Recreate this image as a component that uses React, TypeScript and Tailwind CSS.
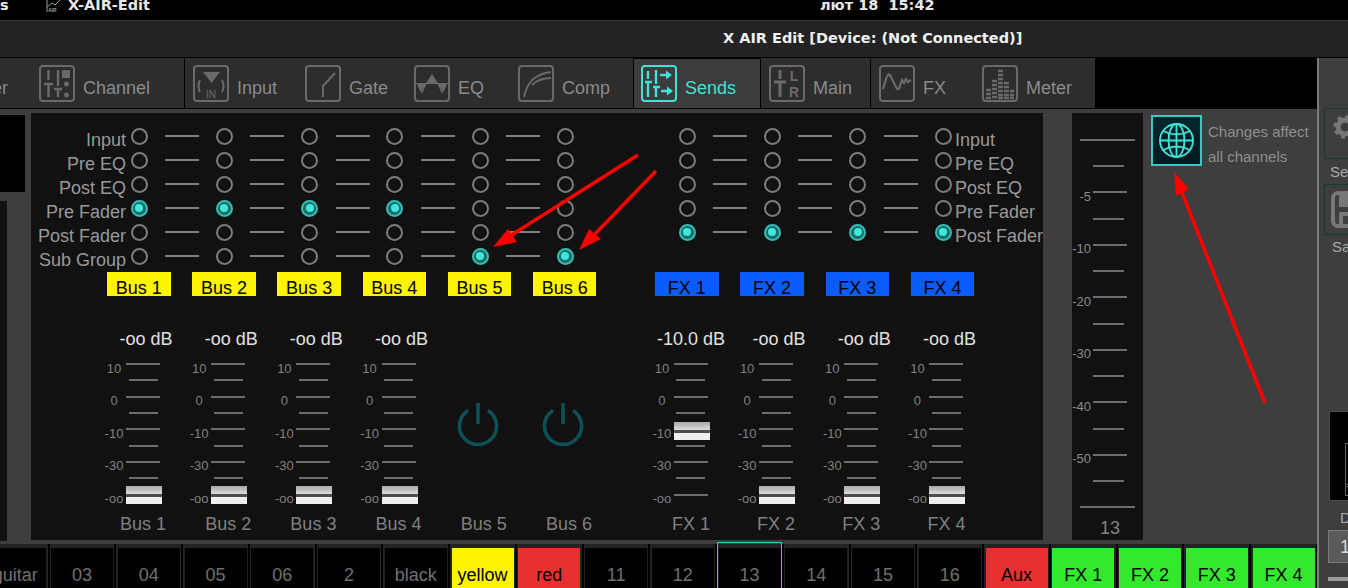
import { ReactNode } from "react";

const GREY = "#6a6a6a";
const CYAN = "#3de3d6";

function IconBox({ color, children }: { color: string; children: ReactNode }) {
  return (
    <svg width="36" height="37" viewBox="0 0 36 37" fill="none" stroke={color} strokeWidth="2" className="shrink-0">
      <rect x="1" y="1" width="34" height="35" rx="3" strokeWidth="2" />
      {children}
    </svg>
  );
}

const icons: Record<string, (c: string) => ReactNode> = {
  Channel: (c) => (
    <IconBox color={c}>
      <path d="M9.500 5v10M5 19h9M9.500 19v13M19 5v16M15 24h8M19 24v8" strokeWidth="2.400" />
      <rect x="23" y="5" width="8" height="8" rx="1" fill={c} stroke="none" />
      <circle cx="27.500" cy="19" r="2.500" fill={c} stroke="none" />
      <circle cx="27.500" cy="30" r="2.500" fill={c} stroke="none" />
    </IconBox>
  ),
  Input: (c) => (
    <IconBox color={c}>
      <path d="M10 7h17l-8.500 11z" fill={c} stroke="none" />
      <path d="M7 15q-3 6 0 12M29 15q3 6 0 12" strokeWidth="2" />
      <text x="18" y="33" textAnchor="middle" fontSize="10" fontFamily="Liberation Sans" fill={c} stroke="none">IN</text>
    </IconBox>
  ),
  Gate: (c) => (
    <IconBox color={c}>
      <path d="M30 8 18 21v11" strokeWidth="2" />
    </IconBox>
  ),
  EQ: (c) => (
    <IconBox color={c}>
      <path d="M18 9 24.500 19h-13zM3 19h7l-3 9zM33 19h-7l3 9zM10 19h2.500l-4 9h-1zM26 19h-2.500l4 9h1z" fill={c} stroke="none" />
      <path d="M2 18.500h32" strokeWidth="1" />
    </IconBox>
  ),
  Comp: (c) => (
    <IconBox color={c}>
      <path d="M6 32C9 18 16 9 33 7M14 20c5-5 10-7 19-7" strokeWidth="1.800" />
    </IconBox>
  ),
  Sends: (c) => (
    <IconBox color={c}>
      <path d="M7 6v8M4 17h7M7 17v15M15 5v14M12 22h7M15 22v10M19 10h7M20 26h7" strokeWidth="2.400" />
      <path d="M25 5.500l6 4.500-6 4.500zM26 21.500l6 4.500-6 4.500z" fill={c} stroke="none" />
    </IconBox>
  ),
  Main: (c) => (
    <IconBox color={c}>
      <path d="M11 5v9M5 17h12M11 17v15" strokeWidth="3" />
      <text x="25" y="16" textAnchor="middle" fontSize="14" fontFamily="Liberation Sans" fontWeight="700" fill={c} stroke="none">L</text>
      <text x="25" y="32" textAnchor="middle" fontSize="14" fontFamily="Liberation Sans" fontWeight="700" fill={c} stroke="none">R</text>
    </IconBox>
  ),
  FX: (c) => (
    <IconBox color={c}>
      <path d="M4 24 7 14Q9 8 11 10L14 16 18 24Q20 25 21 21L23 15 25 18 27 14 29 17 32 15" strokeWidth="2.200" />
    </IconBox>
  ),
  Meter: (c) => (
    <IconBox color={c}>
      <path
        d="M16 6h5M16 10h5M16 14h5M10 16h5M16 18h5M22 18h5M10 20h5M16 22h5M22 22h5M10 24h5M4 25h5M16 26h5M22 26h5M28 26h4M4 29h5M10 28h5M16 30h5M22 30h5M28 30h4M4 33h5M10 32h5M16 33h5M22 33h5M28 33h4"
        strokeWidth="2.600"
      />
    </IconBox>
  ),
};

const tabs = [
  { name: "Channel", w: "w-[146px]", pl: "pl-0", border: true },
  { name: "Input", w: "w-[120px]", pl: "pl-[8px]", border: false },
  { name: "Gate", w: "w-[109px]", pl: "pl-0", border: false },
  { name: "EQ", w: "w-[104px]", pl: "pl-0", border: false },
  { name: "Comp", w: "w-[116px]", pl: "pl-0", border: true },
  { name: "Sends", w: "w-[127px]", pl: "pl-[7px]", border: true },
  { name: "Main", w: "w-[110px]", pl: "pl-[8px]", border: true },
  { name: "FX", w: "w-[111px]", pl: "pl-[8px]", border: false },
  { name: "Meter", w: "w-[113px]", pl: "pl-0", border: false },
];

function TabBar() {
  return (
    <div className="flex h-[51px] w-[1317px] border-b border-black bg-black text-[18px]">
      <div className="flex w-[39px] items-center bg-[#2d2d2d] text-[#8a8a8a]">
        <span className="-ml-[24px] mt-[10px] w-[32px] overflow-hidden text-right">er</span>
      </div>
      {tabs.map((t) => {
        const active = t.name === "Sends";
        return (
          <div
            key={t.name}
            className={`flex ${t.w} ${t.pl} items-center gap-2 ${t.border ? "border-r border-black" : ""} ${
              active ? "mt-px bg-[#3c3c3c] text-[#3de3d6]" : "bg-[#2d2d2d] text-[#8a8a8a]"
            }`}
          >
            {icons[t.name](active ? CYAN : GREY)}
            <span className="mt-[10px]">{t.name}</span>
          </div>
        );
      })}
    </div>
  );
}

const inputs = ["Input", "Pre EQ", "Post EQ", "Pre Fader", "Post Fader", "Sub Group"];
const busStrips = [
  { name: "Bus 1", sel: 3, db: "-oo dB" },
  { name: "Bus 2", sel: 3, db: "-oo dB" },
  { name: "Bus 3", sel: 3, db: "-oo dB" },
  { name: "Bus 4", sel: 3, db: "-oo dB" },
  { name: "Bus 5", sel: 5, db: "" },
  { name: "Bus 6", sel: 5, db: "" },
];
const fxStrips = [
  { name: "FX 1", sel: 4, db: "-10.0 dB", cap: 66 },
  { name: "FX 2", sel: 4, db: "-oo dB", cap: 130 },
  { name: "FX 3", sel: 4, db: "-oo dB", cap: 130 },
  { name: "FX 4", sel: 4, db: "-oo dB", cap: 130 },
];

function Radio({ on }: { on: boolean }) {
  return on ? (
    <div className="flex h-[17px] w-[17px] shrink-0 items-center justify-center rounded-full border-2 border-[#35bdb5] bg-[#1c6b68]">
      <div className="h-[8px] w-[8px] rounded-full bg-[#3de8dc]" />
    </div>
  ) : (
    <div className="h-[17px] w-[17px] shrink-0 rounded-full border-2 border-[#7d7d7d]" />
  );
}

function RouteColumn({ count, sel, line }: { count: number; sel: number; line: boolean }) {
  return (
    <div className="w-[85.3px] shrink-0">
      {Array.from({ length: count }).map((_, i) => (
        <div key={i} className="flex h-[24px] items-center pl-[4.5px]">
          <Radio on={i === sel} />
          {line && <div className="ml-[17.5px] h-[2px] w-[34px] shrink-0 bg-[#808080]" />}
        </div>
      ))}
    </div>
  );
}

function Tag({ name, color }: { name: string; color: string }) {
  return (
    <div className="w-[85.2px] shrink-0">
      <div className={`flex h-[24px] w-[63.5px] items-center justify-center text-[18px] leading-none text-black ${color}`}>
        <span className="mt-2">{name}</span>
      </div>
    </div>
  );
}

const scale = ["10", "", "0", "", "-10", "", "-30", "", "-oo"];

function Fader({ cap }: { cap: number }) {
  return (
    <div className="relative">
      {scale.map((s, i) => (
        <div key={i} className="flex h-[16.3px] items-center">
          <span className="mt-2 w-[20px] shrink-0 text-center text-[13px] leading-none text-[#808080]">{s}</span>
          <div className={`h-[2px] bg-[#6e6e6e] ${i % 2 === 0 ? "ml-[2px] w-[34px]" : "ml-[4.5px] w-[29px]"}`} />
        </div>
      ))}
      <div className="absolute left-[22px] flex h-[18px] w-[36px] flex-col" style={{ top: cap }}>
        <div className="h-[8px] bg-gradient-to-b from-[#a8a8a8] to-[#dcdcdc]" />
        <div className="h-[3px] bg-[#4d4d4d]" />
        <div className="h-[7px] bg-[#f0f0f0]" />
      </div>
    </div>
  );
}

function Strip({ name, db, cap }: { name: string; db: string; cap: number | null }) {
  return (
    <div className="w-[85.2px] shrink-0">
      <div className={`mt-[31px] h-[24px] whitespace-nowrap text-center text-[18px] leading-[24px] text-[#e0e0e0] ${db.length > 6 ? "w-[78px]" : "w-[84px]"}`}>
        {db}
      </div>
      <div className="mt-[5px] h-[146.7px]">
        {cap !== null ? (
          <Fader cap={cap} />
        ) : (
          <svg width="44" height="44" viewBox="0 0 44 44" fill="none" stroke="#0e5058" strokeWidth="3.600" className="ml-[11px] translate-y-[46px]">
            <path d="M12 8.500a18.500 18.500 0 1 0 20 0" />
            <path d="M22 1v21" />
          </svg>
        )}
      </div>
      <div className="mt-[9.300px] h-[24px] w-[78px] text-center text-[18px] leading-[24px] text-[#808080]">{name}</div>
    </div>
  );
}

function MainPanel() {
  return (
    <div className="ml-[6px] mt-[4px] h-[427px] w-[1012px] shrink-0 bg-[#111111] pt-[11px]">
      <div className="flex">
        <div className="w-[95px] shrink-0 text-right text-[18px] leading-none text-[#999999]">
          {inputs.map((l) => (
            <div key={l} className="flex h-[24px] items-center justify-end">
              <span className="mt-2">{l}</span>
            </div>
          ))}
        </div>
        {busStrips.map((b, i) => (
          <RouteColumn key={b.name} count={6} sel={b.sel} line={i < 5} />
        ))}
        <div className="w-[36.4px] shrink-0" />
        {fxStrips.map((f, i) => (
          <div key={f.name} className={i === 3 ? "w-[21.5px] shrink-0" : ""}>
            <RouteColumn count={5} sel={f.sel} line={i < 3} />
          </div>
        ))}
        <div className="ml-[3.5px] text-[18px] leading-none text-[#999999]">
          {inputs.slice(0, 5).map((l) => (
            <div key={l} className="flex h-[24px] items-center whitespace-nowrap">
              <span className="mt-2">{l}</span>
            </div>
          ))}
        </div>
      </div>
      <div className="ml-[76px] mt-[4px] flex">
        {busStrips.map((b) => (
          <Tag key={b.name} name={b.name} color="bg-[#fff500]" />
        ))}
        <div className="w-[37px] shrink-0" />
        {fxStrips.map((f) => (
          <Tag key={f.name} name={f.name} color="bg-[#0a5cff]" />
        ))}
      </div>
      <div className="ml-[73px] flex">
        {busStrips.map((b, i) => (
          <Strip key={b.name} name={b.name} db={b.db} cap={i < 4 ? 130 : null} />
        ))}
        <div className="w-[36.8px] shrink-0" />
        {fxStrips.map((f) => (
          <Strip key={f.name} name={f.name} db={f.db} cap={f.cap} />
        ))}
      </div>
    </div>
  );
}

const masterScale = ["", "", "-5", "", "-10", "", "-20", "", "-30", "", "-40", "", "-50", "", ""];

function MasterFader() {
  return (
    <div className="ml-[29px] mt-[4px] h-[427px] w-[71px] shrink-0 bg-[#111111] pt-[13.600px]">
      {masterScale.map((s, i) => {
        const wide = i === 0 || i === 14;
        return (
          <div key={i} className="flex h-[26.27px] items-center">
            {wide ? (
              <div className="ml-[8px] h-[2px] w-[55px] bg-[#6e6e6e]" />
            ) : (
              <>
                <span className="mt-2 w-[19px] shrink-0 text-right text-[13px] leading-none text-[#8c8c8c]">{s}</span>
                <div className={`ml-[2px] h-[2px] bg-[#6e6e6e] ${i % 2 === 0 ? "w-[34px]" : "w-[31px]"}`} />
              </>
            )}
          </div>
        );
      })}
      <div className="-mt-[5px] pl-[5px] text-center text-[18px] leading-[24px] text-[#808080]">13</div>
    </div>
  );
}

function GlobalNote() {
  return (
    <div className="ml-[8px] mt-[6px] flex">
      <div className="flex h-[51px] w-[51px] shrink-0 items-center justify-center border-2 border-[#38c9c0] bg-gradient-to-b from-[#03262d] to-[#011a20]">
        <svg width="37" height="37" viewBox="0 0 37 37" fill="none" stroke={CYAN} strokeWidth="1.900">
          <circle cx="18.500" cy="18.500" r="16.500" />
          <ellipse cx="18.500" cy="18.500" rx="8" ry="16.500" />
          <path d="M18.500 2v33M2 18.500h33M5 9q13.500 7 27 0M5 28q13.500-7 27 0" />
        </svg>
      </div>
      <div className="ml-[6px] whitespace-nowrap pt-[4px] text-[15px] leading-[25px] text-[#8f8f8f]">
        <div>Changes affect</div>
        <div>all channels</div>
      </div>
    </div>
  );
}

const cells = [
  { n: "guitar" }, { n: "03" }, { n: "04" }, { n: "05" }, { n: "06" }, { n: "2" }, { n: "black" },
  { n: "yellow", c: "bg-[#fff500] text-black" },
  { n: "red", c: "bg-[#e93030] text-black" },
  { n: "11" }, { n: "12" }, { n: "13", sel: true }, { n: "14" }, { n: "15" }, { n: "16" },
  { n: "Aux", c: "bg-[#e93030] text-black" },
  { n: "FX 1", c: "bg-[#33e92e] text-black" },
  { n: "FX 2", c: "bg-[#33e92e] text-black" },
  { n: "FX 3", c: "bg-[#33e92e] text-black" },
  { n: "FX 4", c: "bg-[#33e92e] text-black" },
];

function ChannelStrip() {
  return (
    <div className="h-[44px] bg-[#232323]">
      <div className="-ml-[17.2px] flex h-full">
        {cells.map((cell) => (
          <div key={cell.n} className="relative w-[66.75px] shrink-0 border-r-2 border-black pl-[1.500px] pr-[1.200px] pt-[4px]">
            {cell.sel && <div className="absolute -top-[2px] bottom-0 left-0 right-0 border border-b-0 border-[#38c9c0]" />}
            <div className={`flex h-[40px] items-center justify-center whitespace-nowrap pt-[14px] text-[18px] ${cell.c ?? "bg-black text-[#707070]"}`}>
              {cell.n}
            </div>
          </div>
        ))}
      </div>
    </div>
  );
}

function Sidebar() {
  return (
    <div className="h-[530px] w-[29px] shrink-0 overflow-hidden bg-[#3e3e3e] pl-[5px] text-[15px] text-[#a8a8a8]">
      <div className="mt-[50px] h-[51px] w-[60px] border border-[#123c3a] pl-[8px] pt-[6px]">
        <svg width="24" height="24" viewBox="0 0 24 24" fill="none" stroke="#777777">
          <circle cx="12" cy="12" r="7" strokeWidth="5" />
          <circle cx="12" cy="12" r="10" strokeWidth="3.500" strokeDasharray="3.900 3.950" />
        </svg>
      </div>
      <div className="ml-[6px] mt-[3px] leading-[20px]">Setup</div>
      <div className="mt-[2px] h-[51px] w-[60px] border border-[#123c3a] pl-[6px] pt-[6px]">
        <svg width="40" height="37" viewBox="0 0 40 37" fill="none" stroke="#777777" strokeWidth="4">
          <rect x="2" y="2" width="36" height="33" rx="5" />
          <path d="M10 2h16v12H10z" fill="#777777" />
          <path d="M10 35V23h20v12" />
        </svg>
      </div>
      <div className="ml-[8px] mt-[2px] leading-[20px]">Save</div>
      <div className="ml-[5px] mt-[154px] h-[90px] w-[60px] border border-[#4a4a4a] bg-black pl-[15px] pt-[31px]">
        <div className="h-[42px] w-[30px] border border-[#666666]" />
        <div className="mt-[1px] h-[10px] w-[8px] border border-[#666666]" />
      </div>
      <div className="ml-[16px] mt-[7px] leading-[20px]">Dim</div>
      <div className="ml-[4px] mt-[2px] h-[33px] w-[60px] border border-[#7a7a7a] bg-[#5a5a5a] pl-[11px] text-[18px] leading-[33px] text-[#d8d8d8]">
        1
      </div>
      <div className="ml-[4px] mt-[14px] h-[4px] w-[60px] bg-[#9a9a9a]" />
    </div>
  );
}

function Arrows() {
  return (
    <svg className="pointer-events-none absolute left-0 top-0" width="1348" height="588" fill="#ff0000" stroke="none">
      <path d="M638 155 510 236M656 171 595 234M1265 403 1181 190" stroke="#ff0000" strokeWidth="3.500" fill="none" />
      <path d="M493 247 508 229 517 242z" />
      <path d="M579 250 589 229 601 239z" />
      <path d="M1174 172 1176 196 1189 189z" />
    </svg>
  );
}

export default function App() {
  return (
    <div className="relative h-[588px] w-[1348px] overflow-hidden bg-black" style={{ fontFamily: '"Liberation Sans", sans-serif' }}>
      <div className="flex h-[20px] items-start overflow-hidden bg-black text-[14.5px] font-bold text-[#e8e8e8]" style={{ fontFamily: '"DejaVu Sans", sans-serif' }}>
        <span className="-mt-[5px] w-[46px]">s</span>
        <svg width="16" height="12" viewBox="0 0 16 12" fill="none" stroke="#9a9a9a" strokeWidth="1" className="shrink-0">
          <path d="M1 7 6 3 9 5 14 0M1 0v12" />
          <text x="2" y="11.500" fontSize="5" fill="#9a9a9a" stroke="none" fontFamily="Liberation Sans">AIR</text>
        </svg>
        <span className="-mt-[5px] ml-[6px] w-[752px]">X-AIR-Edit</span>
        <span className="-mt-[5px] whitespace-pre">лют 18  15:42</span>
      </div>
      <div className="flex h-[38px] items-center border-y border-t-[#3a3a3a] border-b-black bg-[#232323] pl-[723px] text-[14.5px] font-bold text-[#f0f0f0]" style={{ fontFamily: '"DejaVu Sans", sans-serif' }}>
        X AIR Edit [Device: (Not Connected)]
      </div>
      <div className="flex">
        <div className="w-[1317px] shrink-0 overflow-hidden bg-[#3e3e3e]">
          <TabBar />
          <div className="flex h-[435px]">
            <div className="w-[25px] shrink-0 pt-[6px]">
              <div className="h-[77px] bg-black" />
              <div className="mt-[9px] h-[340px] w-[7px] bg-[#111111]" />
            </div>
            <MainPanel />
            <MasterFader />
            <GlobalNote />
          </div>
          <ChannelStrip />
        </div>
        <div className="w-[2px] shrink-0 bg-[#7a7a7a]" />
        <Sidebar />
      </div>
      <Arrows />
    </div>
  );
}
